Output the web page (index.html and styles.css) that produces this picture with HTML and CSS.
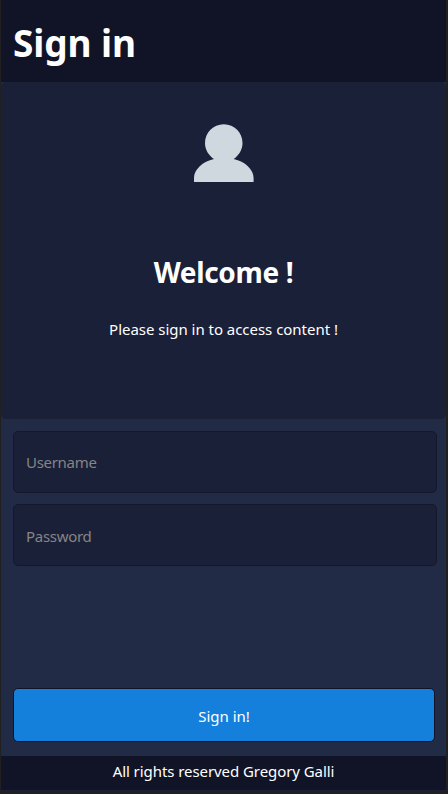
FILE: index.html
```html
<!DOCTYPE html>
<html lang="en">
<head>
<meta charset="utf-8">
<title>Sign in</title>
<link rel="stylesheet" href="styles.css">
</head>
<body>
<div class="app">
  <header class="header"><h1>Sign in</h1></header>
  <section class="hero">
    <svg class="avatar" viewBox="0 0 60 58" width="60" height="58" aria-hidden="true">
      <path d="M20 35C15 31.500 11 26 11 19.200C11 8.500 19.200 0.200 29.800 0.200S48.500 8.500 48.500 19.200C48.500 26 44.500 31.500 39.700 35C51 37.500 59.600 45.500 59.600 54V58H0V54C0 45.500 8.700 37.500 20 35Z"/>
    </svg>
    <h2>Welcome !</h2>
    <p>Please sign in to access content !</p>
  </section>
  <form class="form">
    <input class="field username" type="text" placeholder="Username">
    <input class="field" type="password" placeholder="Password">
    <button class="submit" type="button"><span>Sign in!</span></button>
  </form>
  <footer class="footer"><span>All rights reserved Gregory Galli</span></footer>
</div>
</body>
</html>
```
FILE: styles.css
```css
* { box-sizing: border-box; }
body {
  margin: 0;
  height: 794px;
  padding: 0 2px 3px 1px;
  background: #202020;
  color: #fff;
  font: 15px/20px "Noto Sans", "Segoe UI", sans-serif;
  overflow: hidden;
}
h1, h2, p { margin: 0; white-space: nowrap; }
.app {
  display: flex;
  flex-direction: column;
  height: 791px;
  background: #212b46;
}
.header {
  height: 82px;
  padding: 17px 12px;
  background: #111426;
}
h1 { font-size: 37px; line-height: 52px; letter-spacing: -0.1px; }
.hero {
  display: flex;
  flex-direction: column;
  align-items: center;
  height: 337px;
  padding-top: 42px;
  background: #1b2039;
  border-radius: 5px;
}
.avatar { display: block; fill: #d0d8df; }
h2 { margin-top: 70px; font-size: 28px; line-height: 40px; letter-spacing: -0.35px; }
.hero p { margin-top: 27px; letter-spacing: -0.03px; }
.form {
  flex: 1;
  display: flex;
  flex-direction: column;
  gap: 11px;
  padding: 12px 9px 14px 12px;
}
.field {
  width: 100%;
  height: 62px;
  padding: 1px 12px 0;
  background: #1b2039;
  border: 1px solid #14182c;
  border-radius: 5px;
  color: #fff;
  font: inherit;
  letter-spacing: -0.3px;
}
.username { padding: 0 12px 1px; }
.field::placeholder { color: #858585; opacity: 1; }
.submit {
  width: 422px;
  height: 54px;
  margin-top: auto;
  padding: 2px 0 0;
  background: #1480dc;
  border: 1px solid #111426;
  border-radius: 5px;
  color: #fff;
  font: inherit;
}
.footer {
  height: 35px;
  padding-top: 5px;
  background: #111426;
  border-bottom: 1px solid #1b2039;
  text-align: center;
  letter-spacing: -0.07px;
}
```
